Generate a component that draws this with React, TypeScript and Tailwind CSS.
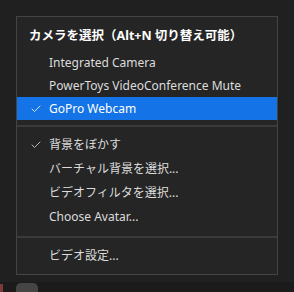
import { Check } from 'lucide-react'

const font = { fontFamily: '"Noto Sans", "Noto Sans CJK JP", sans-serif' }

type Item = { label: string; checked?: boolean; active?: boolean; tight?: boolean }

const cameras: Item[] = [
  { label: 'Integrated Camera' },
  { label: 'PowerToys VideoConference Mute' },
  { label: 'GoPro Webcam', checked: true, active: true },
]

const effects: Item[] = [
  { label: '背景をぼかす', checked: true },
  { label: 'バーチャル背景を選択...' },
  { label: 'ビデオフィルタを選択...' },
  { label: 'Choose Avatar...' },
]

function Row({ label, checked, active, tight }: Item) {
  return (
    <div
      className={`flex items-center text-[12px] ${tight ? 'h-[23px]' : 'h-6'} ${
        active ? 'bg-[#1473e6] text-white' : 'text-[#dcdcdc]'
      }`}
    >
      <span className="flex w-8 justify-end pr-[7px]">
        {checked && <Check className="size-3" strokeWidth={1.6} />}
      </span>
      <span className="whitespace-nowrap">{label}</span>
    </div>
  )
}

export default function App() {
  return (
    <div className="flex h-[292px] w-[294px] flex-col bg-[#202020]" style={font}>
      <div className="px-4 pt-4">
        <div className="w-[262px] border border-[#444] bg-[#252525] pt-[7px] pb-[6px]">
          <div className="flex h-6 items-center pl-3 text-[12.5px] font-bold whitespace-nowrap text-white">
            カメラを選択（Alt+N 切り替え可能）
          </div>
          <div className="mt-[3px]">
            {cameras.map((c) => (
              <Row key={c.label} {...c} tight />
            ))}
          </div>
          <div className="mt-[5px] mb-[6px] h-[2px] bg-[#3a3a3a]" />
          {effects.map((c) => (
            <Row key={c.label} {...c} />
          ))}
          <div className="mt-[7px] mb-[6px] h-[2px] bg-[#3a3a3a]" />
          <Row label="ビデオ設定..." />
        </div>
      </div>
      <div className="mt-auto flex h-[10px] items-end gap-[13px] bg-[#1b1b1b]">
        <div className="h-[8px] w-[3px] bg-[#7a3a3a]" />
        <div className="h-[9px] w-[22px] rounded-t-[5px] bg-[#454545]" />
      </div>
    </div>
  )
}
